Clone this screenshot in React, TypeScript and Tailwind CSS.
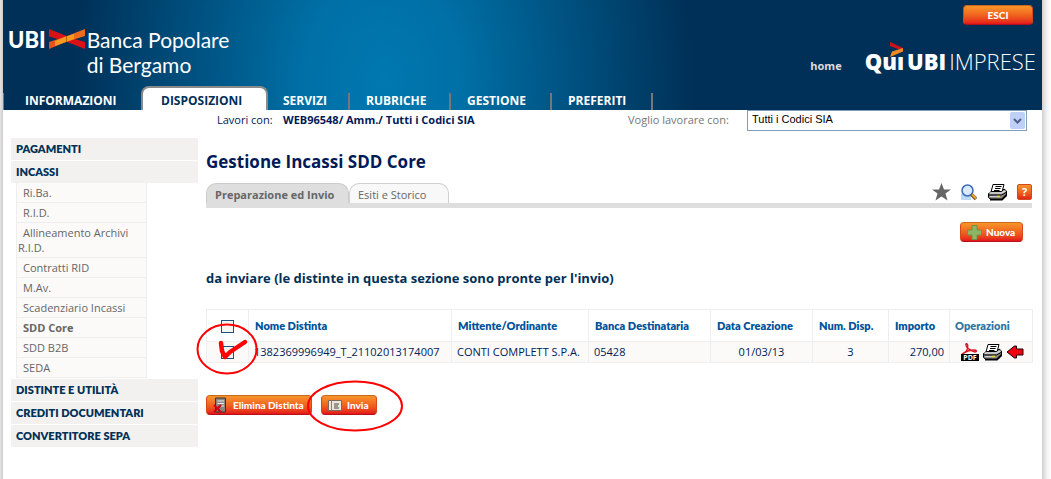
import type { ReactNode } from "react";

const F = "font-['Open_Sans','Noto_Sans',sans-serif]";

function Printer({ className = "" }: { className?: string }) {
  return (
    <svg viewBox="0 0 19 18" className={`h-[18px] w-[19px] shrink-0 ${className}`} aria-hidden="true">
      <path d="M5 1.500 H16 L14 9 H3 Z" fill="#fff" stroke="#000" />
      <path d="M7.500 3.500 H13.500 M7 5.500 H12.500 M6 7.500 H11.500" stroke="#000" />
      <path d="M3.500 8.500 H13.500 L16 6 L18.500 8 V12 L14 16.500 H3 L0.500 14.500 V10.500 Z" fill="#8c8c88" stroke="#000" />
      <path d="M1.500 10 H13.500 L17.500 8" stroke="#d8d8d8" strokeWidth="1.500" fill="none" />
      <path d="M1 12 H13.500 L18 9.500" stroke="#000" fill="none" />
      <path d="M2 13.500 H9" stroke="#d0d0d0" />
      <path d="M9 13.500 H12" stroke="#e8dc20" strokeWidth="1.500" />
      <path d="M2 16.500 H14 L18.500 12" stroke="#000" strokeWidth="2" fill="none" />
    </svg>
  );
}

function OrangeButton({ children, className = "" }: { children: ReactNode; className?: string }) {
  return (
    <button
      type="button"
      className={`flex h-5 items-center rounded-[4px] border border-[#d4481a] border-t-[#c8681a] border-b-[#b8101a] bg-linear-to-b from-[#f7952b] via-[#f0631f] to-[#e4101b] font-['Lato','Open_Sans',sans-serif] text-[10px] font-black whitespace-nowrap text-white ${className}`}
    >
      {children}
    </button>
  );
}

const subItems = ["Ri.Ba.", "R.I.D.", "Allineamento Archivi R.I.D.", "Contratti RID", "M.Av.", "Scadenziario Incassi", "SDD Core", "SDD B2B", "SEDA"];

function Section({ label }: { label: string }) {
  return (
    <a href="#" className="block h-[22px] bg-[#f2f1f0] pl-[5px] font-['Lato','Open_Sans',sans-serif] text-[11px] leading-[22px] font-extrabold text-[#003057]">
      {label}
    </a>
  );
}

function Sidebar() {
  return (
    <nav className="mt-[7px] flex w-[187px] shrink-0 flex-col gap-px" aria-label="Menu">
      <Section label="PAGAMENTI" />
      <div>
        <Section label="INCASSI" />
        <ul className="ml-[5px] w-[131px] border-x border-[#eeeeee] bg-[#fbfaf9]">
          {subItems.map((s) => (
            <li key={s} className="border-b border-[#eeeeee] py-[2px] pl-px text-[11px] leading-[15px] text-[#666]">
              <a href="#" className={s === "SDD Core" ? "block indent-[5px] font-bold" : "block indent-[5px]"}>
                {s}
              </a>
            </li>
          ))}
        </ul>
      </div>
      <Section label="DISTINTE E UTILITÀ" />
      <Section label="CREDITI DOCUMENTARI" />
      <Section label="CONVERTITORE SEPA" />
    </nav>
  );
}

function Header() {
  return (
    <header className="flex h-[110px] flex-col justify-between bg-[#003057] bg-[radial-gradient(ellipse_310px_420px_at_380px_80px,#0078b0_0%,#0070a6_25%,#003057_100%)] text-white">
      <div className="flex justify-between pr-[6px] pl-[5px]">
        <a href="#" className="mt-[27px] flex items-start font-['Lato','Open_Sans',sans-serif]" aria-label="UBI Banca Popolare di Bergamo">
          <span className="text-[22px] leading-[26px] font-black">UBI</span>
          <svg viewBox="0 0 36 20" className="mt-[2px] ml-[3px] h-5 w-9" aria-hidden="true">
            <path d="M0 0 L19 7.500 V13 L0 7.500 Z" fill="#d9121a" />
            <path d="M36 20 L17 12.500 V7.500 L36 13 Z" fill="#d9121a" />
            <path d="M0 20 L18 12.500 V7 L0 13 Z" fill="#e8501c" />
            <path d="M36 0 L17 7.500 V13 L36 7 Z" fill="#ee6a1d" />
            <path d="M6 12 L17 7.500 L25 5 V10 L17 13 L6 17 Z" fill="#f59a20" />
            <path d="M17.500 7 V13" stroke="#b85a10" />
          </svg>
          <span className="ml-[2px] text-[21px]">
            <span className="block leading-[26px]">Banca Popolare</span>
            <span className="block leading-6">di Bergamo</span>
          </span>
        </a>
        <div className="flex flex-col items-end">
          <OrangeButton className="mt-[5px] mr-[3px] w-[70px] justify-center">ESCI</OrangeButton>
          <div className="mt-[17px] flex items-start">
            <a href="#" className="mt-[16px] mr-[23px] text-[11px] leading-4 font-bold text-[#ddd]">
              home
            </a>
            <a href="#" className="relative flex items-baseline gap-[3px] font-['Open_Sans',sans-serif] text-[22px] leading-[38px] font-extrabold">
              <svg viewBox="0 0 14 16" className="absolute top-0 left-[25px] h-4 w-[14px]" aria-hidden="true">
                <path d="M0 0 L13 6 V9 L0 4 Z" fill="#d0101a" />
                <path d="M13 6 V9.500 L0 15 L2 9.500 Z" fill="#f08a20" />
              </svg>
              <span>Quı</span>
              <span>UBI</span>
              <span className="font-light">IMPRESE</span>
            </a>
          </div>
        </div>
      </div>
    </header>
  );
}

const items = ["SERVIZI", "RUBRICHE", "GESTIONE", "PREFERITI"];

function MainNav() {
  return (
    <nav className="-mt-6 flex h-6 items-end font-['Open_Sans',sans-serif] text-[12px] font-bold text-white" aria-label="Principale">
      <a href="#" className="h-[17px] w-[138px] border-l border-[#777] pl-[21px] leading-[15px]">
        INFORMAZIONI
      </a>
      <a href="#" className="h-6 w-[127px] rounded-t-[8px] border-x-2 border-t-2 border-[#8a8a8a] bg-white pl-[18px] leading-[25px] text-[#003057]">
        DISPOSIZIONI
      </a>
      {items.map((t) => (
        <a key={t} href="#" className={t === "SERVIZI" ? "h-[17px] w-[82px] border-r-2 border-[#777] pl-[15px] leading-[15px]" : "h-[17px] w-[101px] border-r-2 border-[#777] pl-4 leading-[15px]"}>
          {t}
        </a>
      ))}
    </nav>
  );
}

const th = "border border-[#eeeeee] pt-px text-left font-['Lato','Open_Sans',sans-serif] text-[11px] font-extrabold whitespace-nowrap text-[#00529b]";
const td = "border border-[#eeeeee] bg-[#fbfaf9] text-[11px] whitespace-nowrap text-[#001a57]";
const box = "block size-[13px] appearance-none border border-[#1c5180] bg-[#f4f4f1]";

function Distinte() {
  return (
    <table className="mt-[22px] w-full table-fixed border-collapse">
      <colgroup>
        <col className="w-[42px]" />
        <col className="w-[203px]" />
        <col className="w-[137px]" />
        <col className="w-[122px]" />
        <col className="w-[102px]" />
        <col className="w-[76px]" />
        <col className="w-[61px]" />
        <col className="w-[83px]" />
      </colgroup>
      <thead>
        <tr className="h-8">
          <th className={`${th} pl-[14px]`}>
            <input type="checkbox" aria-label="Seleziona tutte" className={box} />
          </th>
          <th className={`${th} pl-[6px]`}>Nome Distinta</th>
          <th className={`${th} pl-[6px]`}>Mittente/Ordinante</th>
          <th className={`${th} pl-[6px]`}>Banca Destinataria</th>
          <th className={`${th} pl-[6px]`}>Data Creazione</th>
          <th className={`${th} pl-[6px]`}>Num. Disp.</th>
          <th className={`${th} pl-[6px]`}>Importo</th>
          <th className={`${th} pl-[5px]`}>
            <span className="text-[#2f76a5]">Operazioni</span>
          </th>
        </tr>
      </thead>
      <tbody>
        <tr className="h-[21px]">
          <td className={`${td} pl-[14px]`}>
            <div className="relative">
              <input type="checkbox" aria-label="Seleziona 1382369996949_T_21102013174007" className={box} />
              <svg viewBox="0 0 62 52" className="pointer-events-none absolute -top-[23px] -left-[25px] h-[52px] w-[62px] max-w-none" aria-hidden="true">
                <ellipse cx="31" cy="26" rx="29.500" ry="24.500" fill="none" stroke="#f00" strokeWidth="2" />
                <path d="M25 20 L26 28 L29 34 L34 29 L49 19" fill="none" stroke="#f00" strokeWidth="4.500" strokeLinecap="round" strokeLinejoin="round" />
              </svg>
            </div>
          </td>
          <td className={`${td} pl-[5px]`}>1382369996949_T_21102013174007</td>
          <td className={`${td} pl-[5px]`}>CONTI COMPLETT S.P.A.</td>
          <td className={`${td} pl-[5px]`}>05428</td>
          <td className={`${td} text-center`}>01/03/13</td>
          <td className={`${td} text-center`}>3</td>
          <td className={`${td} pr-[5px] text-right`}>270,00</td>
          <td className={`${td} pl-[11px]`}>
            <div className="flex h-5 items-center gap-1">
              <button type="button" aria-label="PDF">
                <svg viewBox="0 0 18 18" className="h-[18px] w-[18px]" aria-hidden="true">
                  <path d="M5 0.500 C7 0.500 7 3 6.500 5 C6 8 4 10 1 11 M5 0.500 C4 3 8 8 14 9 C16 9 16 7 13 7 C8 7 4 9 1 11" fill="none" stroke="#d8101a" strokeWidth="1.300" />
                  <rect y="11" width="18" height="7" fill="#000" />
                  <text x="9" y="17" textAnchor="middle" fontSize="7" fontWeight="700" fill="#fff" className={F}>
                    PDF
                  </text>
                </svg>
              </button>
              <button type="button" aria-label="Stampa">
                <Printer />
              </button>
              <button type="button" aria-label="Apri">
                <svg viewBox="0 0 18 14" className="h-[14px] w-[18px]" aria-hidden="true">
                  <path d="M1 7 L8.500 1 H10.500 V4 H17 V10 H10.500 V13 H8.500 Z" fill="#f00010" stroke="#200" />
                </svg>
              </button>
            </div>
          </td>
        </tr>
      </tbody>
    </table>
  );
}

export default function App() {
  return (
    <div className={`flex min-h-screen bg-white ${F}`}>
      <div className="w-[3px] shrink-0 bg-linear-to-r from-[#e4e4e4] to-[#cccccc]" />
      <div className="min-w-0 flex-1">
        <Header />
        <MainNav />
        <div className="flex h-[21px] items-center text-[11px] text-[#001a57]">
          <span className="ml-[214px] w-[66px]">Lavori con:</span>
          <strong className="flex-1 font-bold">WEB96548/ Amm./ Tutti i Codici SIA</strong>
          <label htmlFor="sia" className="w-[119px] text-[#777]">
            Voglio lavorare con:
          </label>
          <div className="relative mr-[15px] h-[21px] w-[280px]">
            <select id="sia" className="block h-full w-full appearance-none border border-[#7f9db9] bg-white pb-[3px] pl-1 font-['Liberation_Sans',sans-serif] text-[11px] text-black">
              <option>Tutti i Codici SIA</option>
            </select>
            <span className="pointer-events-none absolute top-[2px] right-[2px] flex h-[17px] w-[15px] items-center justify-center rounded-xs bg-[#bfd0f8]">
              <svg viewBox="0 0 9 6" className="h-[6px] w-[9px]" aria-hidden="true">
                <path d="M1 1 L4.500 4.500 L8 1" fill="none" stroke="#4d6185" strokeWidth="2" />
              </svg>
            </span>
          </div>
        </div>
        <div className="flex pr-[10px] pl-2">
          <Sidebar />
          <main className="ml-2 min-w-0 flex-1">
            <h1 className="mt-[19px] text-[17px] leading-6 font-bold text-[#001a57]">Gestione Incassi SDD Core</h1>
            <div className="mt-[9px] flex h-[25px] items-start justify-between border-b-5 border-[#dedede] text-[11px] text-[#666]">
              <div className="flex">
                <a href="#" className="h-5 w-[143px] rounded-t-[10px] border border-b-0 border-[#ccc] bg-[#dedede] pl-2 leading-[22px] font-bold">
                  Preparazione ed Invio
                </a>
                <a href="#" className="h-5 w-[100px] rounded-t-[10px] border border-b-0 border-[#d0d0d0] bg-[#f8f8f8] pl-2 leading-[22px]">
                  Esiti e Storico
                </a>
              </div>
              <div className="flex items-center gap-[10px]">
                <button type="button" aria-label="Preferiti">
                  <svg viewBox="0 0 19 18" className="h-[18px] w-[19px]" aria-hidden="true">
                    <path d="M9.500 0 L12 6.500 H19 L13.500 10.500 L15.500 17.500 L9.500 13.500 L3.500 17.500 L5.500 10.500 L0 6.500 H7 Z" fill="#666" />
                  </svg>
                </button>
                <button type="button" aria-label="Cerca">
                  <svg viewBox="0 0 17 17" className="h-[17px] w-[17px]" aria-hidden="true">
                    <path d="M0 10 H10 V16 H0 Z" fill="#bcd8f8" />
                    <circle cx="6.500" cy="6.500" r="5.500" fill="#d8eaff" stroke="#3c68b8" strokeWidth="1.500" />
                    <path d="M10.500 10.500 L15 15" stroke="#6a4a18" strokeWidth="3.500" />
                    <path d="M11 10.500 L15 14.500" stroke="#f0a830" strokeWidth="2" />
                  </svg>
                </button>
                <button type="button" aria-label="Stampa">
                  <Printer />
                </button>
                <button type="button" aria-label="Aiuto" className="h-4 w-[15px] rounded-[2px] border border-[#d4481a] bg-linear-to-b from-[#f7952b] to-[#e02018] text-[11px] leading-[14px] font-bold text-white">
                  ?
                </button>
              </div>
            </div>
            <div className="mt-[14px] mr-[9px] flex justify-end">
              <OrangeButton className="w-[63px] gap-1 pl-[6px]">
                <svg viewBox="0 0 15 15" className="h-[15px] w-[15px]" aria-hidden="true">
                  <path d="M5 0.500 H10 V5 H14.500 V10 H10 V14.500 H5 V10 H0.500 V5 H5 Z" fill="#8fb564" stroke="#6b9440" />
                </svg>
                Nuova
              </OrangeButton>
            </div>
            <h2 className="mt-[26px] text-[13px] leading-5 font-bold text-[#003057]">da inviare (le distinte in questa sezione sono pronte per l'invio)</h2>
            <div className="-mt-px">
              <Distinte />
            </div>
            <div className="mt-8 flex gap-[9px]">
              <OrangeButton className="w-[106px] gap-[6px] pl-[6px]">
                <svg viewBox="0 0 14 16" className="h-4 w-[14px] shrink-0" aria-hidden="true">
                  <path d="M2.500 1 H12.500 V15 H2.500 Z" fill="#8a8580" stroke="#3a3030" />
                  <path d="M4.500 4 H11 M4.500 6.500 H11 M7 9 H11" stroke="#eee" />
                  <path d="M1 8 L8 15 M8 8 L1 15" stroke="#d00010" strokeWidth="2" />
                </svg>
                Elimina Distinta
              </OrangeButton>
              <div className="relative">
                <OrangeButton className="w-[56px] gap-[5px] pl-[6px]">
                  <svg viewBox="0 0 14 11" className="h-[11px] w-[14px] shrink-0" aria-hidden="true">
                    <path d="M0.500 0.500 H13.500 V10.500 H0.500 Z" fill="#eee6da" stroke="#7a6a60" />
                    <path d="M3.500 0.500 V10.500" stroke="#8a7a70" />
                    <path d="M6 4 H11 M6 6 H10 M6 8 H11" stroke="#444" />
                  </svg>
                  Invia
                </OrangeButton>
                <svg viewBox="0 0 96 52" className="pointer-events-none absolute -top-[15px] -left-[14px] h-[52px] w-24 max-w-none" aria-hidden="true">
                  <ellipse cx="48" cy="26" rx="47" ry="24.500" fill="none" stroke="#f00" strokeWidth="2" />
                </svg>
              </div>
            </div>
          </main>
        </div>
      </div>
      <div className="w-[9px] shrink-0 bg-linear-to-r from-[#d0d0d0] via-[#f0f0f0] to-white" />
    </div>
  );
}
